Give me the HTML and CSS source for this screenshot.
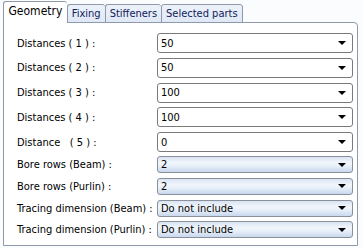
FILE: index.html
```html
<!DOCTYPE html>
<html lang="en">
<head>
    <meta charset="UTF-8">
    <title>Geometry</title>
    <link rel="stylesheet" href="styles.css">
</head>
<body>
    <div class="tabs">
        <div class="tab active">Geometry</div>
        <div class="tab">Fixing</div>
        <div class="tab">Stiffeners</div>
        <div class="tab">Selected parts</div>
    </div>

    <div class="panel">
        <div class="rows">
            <label>Distances ( 1 ) :</label>
            <div class="combo">50</div>
            <label>Distances ( 2 ) :</label>
            <div class="combo">50</div>
            <label>Distances ( 3 ) :</label>
            <div class="combo">100</div>
            <label>Distances ( 4 ) :</label>
            <div class="combo">100</div>
            <label>Distance &nbsp;&nbsp;( 5 ) :</label>
            <div class="combo">0</div>
        </div>
        <div class="rows small">
            <label>Bore rows (Beam) :</label>
            <div class="combo list">2</div>
            <label>Bore rows (Purlin) :</label>
            <div class="combo list">2</div>
            <label>Tracing dimension (Beam) :</label>
            <div class="combo list">Do not include</div>
            <label>Tracing dimension (Purlin) :</label>
            <div class="combo list">Do not include</div>
        </div>
    </div>
</body>
</html>
```

FILE: styles.css
```css
* {
    box-sizing: border-box;
    font-family: 'DejaVu Sans Condensed', 'DejaVu Sans', sans-serif;
}

body {
    margin: 0;
    padding: 1px 4px 0 3px;
    background: #fbfcfe;
    font-size: 11px;
    color: #000;
}

.tabs {
    display: flex;
    align-items: flex-end;
    height: 22px;
    position: relative;
    z-index: 1;
}

.tab {
    height: 19px;
    padding: 0 4px;
    line-height: 17px;
    border: 1px solid #8e9aab;
    border-right: none;
    border-radius: 3px 3px 0 0;
    background: linear-gradient(#edf2fa, #dfe8f5);
    color: #10205a;
    font-size: 11px;
}

.tab:last-child {
    border-right: 1px solid #8e9aab;
}

.tab.active {
    height: 22px;
    padding: 0 4.5px;
    line-height: 19px;
    background: #fff;
    border-bottom: none;
    color: #000;
    font-size: 12px;
}

.tab.active + .tab {
    border-left: 1px solid #8e9aab;
}

.panel {
    height: 224px;
    margin-top: -1px;
    border: 1px solid #8e9aab;
    border-radius: 0 4px 0 0;
    background: #fff;
    padding: 10px 4px 0 13px;
}

.rows {
    display: grid;
    grid-template-columns: 140px 1fr;
    grid-auto-rows: 20px;
    row-gap: 4.8px;
    align-items: center;
}

.rows.small {
    margin-top: 4px;
    grid-auto-rows: 17px;
    row-gap: 4.7px;
}

label {
    white-space: nowrap;
}

.combo {
    height: 100%;
    position: relative;
    border: 1px solid #7a7a7a;
    border-radius: 3px;
    background: #fff;
    padding: 0 0 0 3px;
    display: flex;
    align-items: center;
    line-height: 1;
}

.combo::after {
    content: '';
    position: absolute;
    right: 6px;
    top: 50%;
    margin-top: -2px;
    border-left: 4px solid transparent;
    border-right: 4px solid transparent;
    border-top: 4px solid #000;
}

.combo.list {
    border-color: #8a8f99;
    background: linear-gradient(#d9e4f3 0%, #f2f6fc 40%, #e8eff9 60%, #c8d8ee 100%);
}
```
